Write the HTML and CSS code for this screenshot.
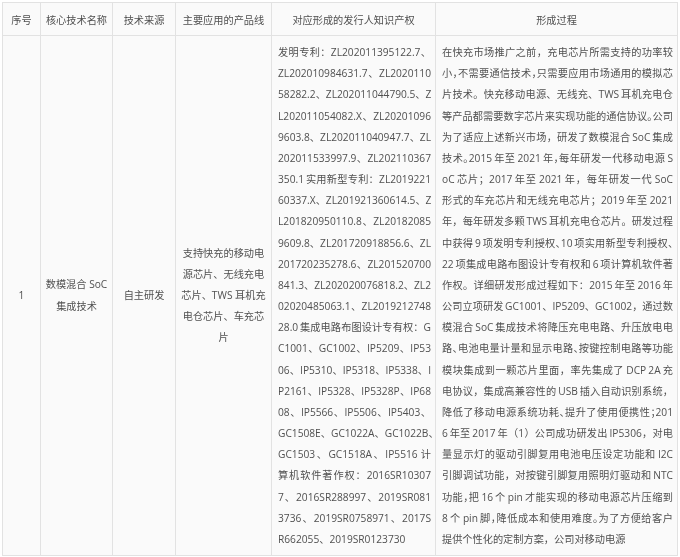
FILE: index.html
```html
<!DOCTYPE html>
<html lang="zh-CN">
<head>
<meta charset="utf-8">
<title>核心技术</title>
<link rel="stylesheet" href="styles.css">
</head>
<body>
<table class="tech">
<colgroup>
<col class="c1"><col class="c2"><col class="c3"><col class="c4"><col class="c5"><col class="c6">
</colgroup>
<thead>
<tr><th>序号</th><th>核心技术名称</th><th>技术来源</th><th>主要应用的产品线</th><th>对应形成的发行人知识产权</th><th>形成过程</th></tr>
</thead>
<tbody>
<tr>
<td>1</td>
<td>数模混合 SoC<br>集成技术</td>
<td>自主研发</td>
<td>支持快充的移动电<br>源芯片、无线充电<br>芯片、TWS 耳机充<br>电仓芯片、车充芯<br>片</td>
<td class="long">
<span>发明专利：ZL202011395122.7、</span>
<span>ZL202010984631.7、ZL2020110</span>
<span>58282.2、ZL202011044790.5、Z</span>
<span>L202011054082.X、ZL20201096</span>
<span>9603.8、ZL202011040947.7、ZL</span>
<span>202011533997.9、ZL202110367</span>
<span>350.1 实用新型专利：ZL2019221</span>
<span>60337.X、ZL201921360614.5、Z</span>
<span>L201820950110.8、ZL20182085</span>
<span>9609.8、ZL201720918856.6、ZL</span>
<span>201720235278.6、ZL201520700</span>
<span>841.3、ZL202020076818.2、ZL2</span>
<span>02020485063.1、ZL2019212748</span>
<span>28.0 集成电路布图设计专有权：G</span>
<span>C1001、GC1002、IP5209、IP53</span>
<span>06、IP5310、IP5318、IP5338、I</span>
<span>P2161、IP5328、IP5328P、IP68</span>
<span>08、IP5566、IP5506、IP5403、</span>
<span>GC1508E、GC1022A、GC1022B、</span>
<span>GC1503、GC1518A、IP5516 计</span>
<span>算机软件著作权：2016SR10307</span>
<span>7、2016SR288997、2019SR081</span>
<span>3736、2019SR0758971、2017S</span>
<span class="end">R662055、2019SR0123730</span>
</td>
<td class="long">
<span>在快充市场推广之前，充电芯片所需支持的功率较</span>
<span class="tight">小，不需要通信技术，只需要应用市场通用的模拟芯</span>
<span>片技术。快充移动电源、无线充、TWS 耳机充电仓</span>
<span class="tight">等产品都需要数字芯片来实现功能的通信协议。公司</span>
<span>为了适应上述新兴市场，研发了数模混合 SoC 集成</span>
<span class="tight">技术。2015 年至 2021 年，每年研发一代移动电源 S</span>
<span>oC 芯片；2017 年至 2021 年，每年研发一代 SoC</span>
<span>形式的车充芯片和无线充电芯片；2019 年至 2021</span>
<span>年，每年研发多颗 TWS 耳机充电仓芯片。研发过程</span>
<span class="tight">中获得 9 项发明专利授权、10 项实用新型专利授权、</span>
<span>22 项集成电路布图设计专有权和 6 项计算机软件著</span>
<span>作权。详细研发形成过程如下：2015 年至 2016 年</span>
<span>公司立项研发 GC1001、IP5209、GC1002，通过数</span>
<span>模混合 SoC 集成技术将降压充电电路、升压放电电</span>
<span class="tight">路、电池电量计量和显示电路、按键控制电路等功能</span>
<span>模块集成到一颗芯片里面，率先集成了 DCP 2A 充</span>
<span>电协议，集成高兼容性的 USB 插入自动识别系统，</span>
<span class="tight">降低了移动电源系统功耗、提升了使用便携性；201</span>
<span>6 年至 2017 年（1）公司成功研发出 IP5306，对电</span>
<span>量显示灯的驱动引脚复用电池电压设定功能和 I2C</span>
<span>引脚调试功能，对按键引脚复用照明灯驱动和 NTC</span>
<span class="tight">功能，把 16 个 pin 才能实现的移动电源芯片压缩到</span>
<span class="tight">8 个 pin 脚，降低成本和使用难度。为了方便给客户</span>
<span class="end">提供个性化的定制方案，公司对移动电源</span>
</td>
</tr>
</tbody>
</table>
</body>
</html>
```
FILE: styles.css
```css
html, body {
  margin: 0;
  background: #ffffff;
}
body {
  padding: 2px 0 0 2px;
  font-family: "Open Sans", "Noto Sans CJK SC", sans-serif;
  font-size: 10.2px;
  color: #505050;
}
.tech {
  table-layout: fixed;
  width: 675px;
  border-collapse: collapse;
  background: #fafafa;
  filter: blur(0.35px);
}
.c1 { width: 38px; }
.c2 { width: 72px; }
.c3 { width: 63px; }
.c4 { width: 96px; }
.c5 { width: 164px; }
.c6 { width: 242px; }
.tech th,
.tech td {
  border: 1px solid #e2e2e2;
  text-align: center;
  vertical-align: middle;
  font-weight: 400;
  padding: 0;
  white-space: nowrap;
}
.tech th {
  height: 32px;
}
.tech td {
  line-height: 21.17px;
}
.tech td.long {
  padding: 6px 4px 5px 6px;
  text-align: left;
}
.long span {
  display: block;
  white-space: nowrap;
  text-align: justify;
  text-align-last: justify;
  word-spacing: -1px;
}
.long span.tight {
  font-feature-settings: "halt";
}
.long span.end {
  text-align-last: left;
}
```
